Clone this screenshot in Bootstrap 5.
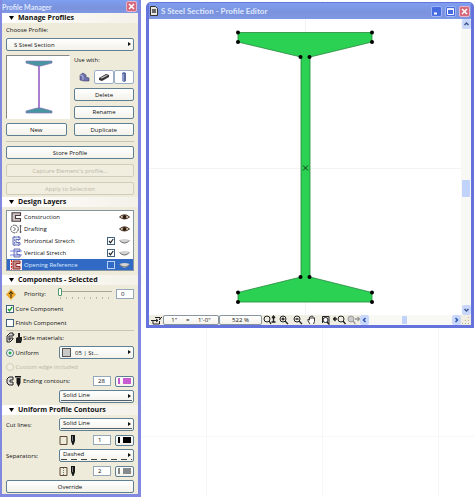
<!DOCTYPE html>
<html lang="en">
<head>
<meta charset="utf-8">
<meta name="viewport" content="width=device-width, initial-scale=1">
<title>Profile Manager</title>
<link href="https://cdn.jsdelivr.net/npm/bootstrap@5.3.0/dist/css/bootstrap.min.css" rel="stylesheet">
<style>
:root{--face:#eeebdb;--edge:#5f7f93}
body{font-family:"Open Sans","Noto Sans",sans-serif;font-size:6px;line-height:10px;color:#111;background:#fff}
button,input,select{font:inherit;color:inherit;border-radius:2px}
.manager{flex:0 0 141px;background:var(--face);border:solid #8188df;border-width:0 3px 3px 2px;min-height:100vh}
.titlebar{font-family:Lato,sans-serif;font-size:7px;background:linear-gradient(#7f9ff0,#7b92dc 60%,#7f98e4);color:#dfe8ff;font-weight:700}
.manager .titlebar{height:13px;padding-right:1px}
.head{font-size:7px;line-height:10px;font-weight:700;margin:0;color:#111;background:linear-gradient(90deg,#fff,#f3f1e8);padding-left:7px}
.head svg{width:5px;height:4px;margin-right:4px}
.group{padding:3px 4px 2px;display:flex;flex-direction:column}
.group.top{padding-top:2px}
.gap2{gap:2px}.gap3{gap:3px}.gap5{gap:5px}.gap7{gap:7px}
.ctl{height:13px;line-height:10px;padding:0 3px;border:1px solid var(--edge);background:linear-gradient(#fff,#f3f2ea);text-align:center}
.ctl:disabled{color:#bab7a5;border-color:#d0cdbb;background:#f1eee0}
.pick{position:relative}
.pick select{appearance:none;width:100%;height:13px;padding:0 8px 0 3px;line-height:10px;border:1px solid var(--edge);background:linear-gradient(#fff,#f3f2ea);display:block}
.pick::after{content:"";position:absolute;right:3px;top:4px;border:solid transparent;border-width:2px 0 2px 3px;border-left-color:#111;pointer-events:none}
.pick.first select{padding-left:7px}
.pick.lined select{line-height:8px;padding-bottom:3px}
.pick.lined::before{content:"";position:absolute;left:2px;right:2px;bottom:2px;height:1px;background:#52606c}
.pick.dashed::before{background:repeating-linear-gradient(90deg,#444 0 6px,transparent 6px 10px)}
.pick.swatch select{padding-left:15px}
.pick.swatch::before{content:"";position:absolute;left:3px;top:2px;width:9px;height:9px;background:#c8c8c6;border:1px solid #555}
.half{flex:1 1 0}
.preview{width:64px;height:64px;background:#fff;border:1px solid;border-color:#888 #fff #fff #888}
.preview svg{width:100%;height:100%;display:block}
.tools{width:60px}
.tool{flex:1;height:14px;padding:0;border:1px solid transparent;background:none;line-height:0}
.tool.on{border-color:#9aafc6;background:#fff}
.tool svg{width:12px;height:10px}
.layers{background:#fff;border:1px solid #8795a1}
.layer{height:12px;padding:0 3px}
.layer.last{height:11px}
.layer>svg{width:12px;height:10px;margin-right:2px}
.layer>svg.eye{width:11px;height:8px;margin:0 0 0 4px}
.layer.chosen{background:#316ac5;color:#dfeaff}
.tick{appearance:none;width:8px;height:8px;margin:0;border:1px solid #42617c;background:#fff;border-radius:0;flex:none}
.tick:checked{background:#fff url("data:image/svg+xml,%3Csvg xmlns='http://www.w3.org/2000/svg' viewBox='0 0 6 6'%3E%3Cpath d='M1 3l1.5 1.8L5.2 1' fill='none' stroke='%23222' stroke-width='1.2'/%3E%3C/svg%3E") center/6px}
.tick.green:checked{background-image:url("data:image/svg+xml,%3Csvg xmlns='http://www.w3.org/2000/svg' viewBox='0 0 6 6'%3E%3Cpath d='M1 3l1.5 1.8L5.2 1' fill='none' stroke='%2322a033' stroke-width='1.4'/%3E%3C/svg%3E")}
.chosen .tick{background:#316ac5;border-color:#b9d0f5}
.dot{appearance:none;width:8px;height:8px;margin:0;border:1px solid #4d7184;border-radius:50%;background:#fff;flex:none}
.dot:checked{background:radial-gradient(#22a84a 0 1px,#fff 2px)}
.dot:disabled{border-color:#d0cdbb;background:#f1eee0}
.dim{color:#bab7a5}
.num{width:18px;height:10px;padding:0 4px;border:1px solid #93a8b8;background:#fff;border-radius:0}
.pen{width:19px;height:11px;padding:0 2px;gap:3px}
.pen i{width:2px;height:6px;background:var(--c)}
.pen b{width:8px;height:6px;background:var(--c)}
.violet{--c:#c75bd0}.ink{--c:#000}.gray{--c:#858a8c}
.slide{appearance:none;width:54px;height:12px;background:linear-gradient(#a9a798,#a9a798) 0 3px/100% 1px no-repeat,repeating-linear-gradient(90deg,#bdb9a6 0 1px,transparent 1px 6px) 2px 9px/100% 2px no-repeat;margin:0}
.slide::-webkit-slider-thumb{appearance:none;width:4px;height:8px;margin-top:-4px;border:1px solid #4f9a68;background:#fff;border-radius:1px}
.g16{width:16px;height:12px;flex:none;margin-right:1px}
.g10{width:10px;height:11px;flex:none}
.line10{height:10px}.line12{height:12px}.line13{height:13px}
.rule{border-top:1px solid #c9c6b5}
.rule.spaced{margin-top:1px}
.w75{width:75px}
.work{flex:1;min-width:0;padding:2px 0 0 5px;min-height:100vh;background:
 linear-gradient(#f6f6f6,#f6f6f6) 65px 0/1px 100% no-repeat,
 linear-gradient(#f6f6f6,#f6f6f6) 181px 0/1px 100% no-repeat,
 linear-gradient(#f6f6f6,#f6f6f6) 297px 0/1px 100% no-repeat,
 linear-gradient(#f6f6f6,#f6f6f6) 0 436px/100% 1px no-repeat,#fff}
.editor{border:solid #6573dc;border-width:1px 3px 3px 3px;border-radius:5px 5px 0 0;background:#fff}
.editor .titlebar{height:16px;font-size:8px;padding:0 1px}
.doc{width:8px;height:10px}
.cap{width:11px;height:11px;padding:0;border:1px solid #9db4f4;background:#476be0;line-height:0}
.cap.close-x{background:#d5697c;border-color:#e8b4cc}
.cap svg,.sb svg{width:100%;height:100%;display:block}
.drawing{flex:1;min-width:0;height:auto;display:block}
.vbar{width:10px;background:#f8f8f5}
.sb{width:9px;height:10px;padding:1px;border:0;background:#c9d8fa;flex:none}
.thumb{background:#c1d3fb;border-radius:1px}
.vbar .thumb{width:8px;height:17px}
.before-v{flex:7}.after-v{flex:5}.before-h{flex:3}.after-h{flex:4}
.status{height:10px;background:#f0eee2}
.status .ctl{height:10px;line-height:8px;border-color:#8995a0}
.scale{width:56px}.zoomval{width:43px}
.ico{width:14px;padding:0;border:0;background:none;line-height:0;color:#222}
.ico svg{width:13px;height:10px}
.ico:disabled{color:#999}
.hbar{flex:1;background:#f8f8f5}
.hbar .thumb{width:5px;height:8px}
.grip{width:10px;height:10px}
</style>
<script src="https://cdn.jsdelivr.net/npm/bootstrap@5.3.0/dist/js/bootstrap.bundle.min.js"></script>
</head>
<body>
<svg class="d-none" aria-hidden="true">
<symbol id="tri" viewBox="0 0 5 4"><path d="M0 0h5L2.500 4z"/></symbol>
<symbol id="eyeopen" viewBox="0 0 11 8"><path d="M.5 4Q5.500-.5 10.500 4 5.500 8 .5 4z" fill="#e6d9c6" stroke="#4a3423"/><circle cx="5.500" cy="4" r="2" fill="#2d1b10"/></symbol>
<symbol id="eyeshut" viewBox="0 0 11 8"><path d="M.5 3Q5.500 1 10.500 3 8 7 5.500 6.500 3 7 .5 3z" fill="#d3d3d3"/><path d="M.5 3.500Q5.500 8.500 10.500 3.500" fill="none" stroke="#777"/></symbol>
<symbol id="nib" viewBox="0 0 6 11"><path d="M1 0h4v6L3.500 10h-1L1 6z" fill="#171717"/><path d="M2.500 1v5" stroke="#aaa" stroke-width=".7"/></symbol>
<symbol id="channel" viewBox="0 0 12 10"><path d="M10.500.8H2v8.400h8.500V6.500H5.500v-3h5z" fill="#c9c5c5" stroke="#4b3a3a" stroke-width="1.100"/></symbol>
<symbol id="cross" viewBox="0 0 9 9"><path d="M2 2l5 5M7 2L2 7" stroke="#fff" stroke-width="1.500"/></symbol>
</svg>
<div class="d-flex align-items-start">
<aside class="manager">
  <div class="titlebar d-flex align-items-center justify-content-between"><span>Profile Manager</span>
    <button class="cap close-x" aria-label="Close panel"><svg><use href="#cross"/></svg></button></div>
  <h2 class="head"><svg><use href="#tri"/></svg>Manage Profiles</h2>
  <div class="group top gap-1">
    <div class="d-flex flex-column gap3">
      <label for="profile" class="line10">Choose Profile:</label>
      <div class="pick first"><select id="profile"><option>S Steel Section</option></select></div>
    </div>
    <div class="d-flex justify-content-between">
      <div class="preview"><svg viewBox="0 0 62 62"><path d="M32 8v46" stroke="#8f55c0" stroke-width="1.500"/><path d="M19 5h26v2l-11 3h-4l-11-3zM19 57h26v-2l-11-3h-4l-11 3z" fill="#4795a0" stroke="#8975b8" stroke-width=".7"/></svg></div>
      <div class="tools d-flex flex-column justify-content-between">
        <span>Use with:</span>
        <div class="d-flex">
          <button class="tool" aria-label="Wall"><svg viewBox="0 0 12 10"><path d="M2 3l3-2 3 2v2l3 1v3H6L2 8z" fill="#6c70ac" stroke="#44476e" stroke-width=".6"/><path d="M2 3l3 1v4" stroke="#b6b9df" fill="none"/></svg></button>
          <button class="tool on" aria-label="Beam"><svg viewBox="0 0 12 10"><path d="M1 6l7-4 3 1v2L4 9 1 8z" fill="#333"/><path d="M2 6l6-3 2 .5-6 3z" fill="#bbb"/></svg></button>
          <button class="tool on" aria-label="Column"><svg viewBox="0 0 12 10"><path d="M4 1l2-1 2 1v8l-2 1-2-1z" fill="#5a6ba0"/><path d="M5 2v7" stroke="#c3cdf0"/></svg></button>
        </div>
        <button class="ctl">Delete</button>
        <button class="ctl">Rename</button>
      </div>
    </div>
    <div class="d-flex gap7"><button class="ctl half">New</button><button class="ctl half">Duplicate</button></div>
    <div class="rule spaced"></div>
    <div class="d-flex flex-column gap5">
      <button class="ctl">Store Profile</button>
      <button class="ctl" disabled>Capture Element's profile...</button>
      <button class="ctl" disabled>Apply to Selection</button>
    </div>
  </div>
  <h2 class="head"><svg><use href="#tri"/></svg>Design Layers</h2>
  <div class="group pb-1">
    <div class="layers">
      <div class="layer d-flex align-items-center"><svg><use href="#channel"/></svg><span class="flex-grow-1">Construction</span><svg class="eye"><use href="#eyeopen"/></svg></div>
      <div class="layer d-flex align-items-center"><svg viewBox="0 0 12 10"><circle cx="4.500" cy="5" r="3.800" fill="none" stroke="#444" stroke-dasharray="2 .6"/><path d="M3.500 3l2 2-2 2M10.500 1v8M9.500 2h2M9.500 8h2" fill="none" stroke="#555" stroke-width=".9"/></svg><span class="flex-grow-1">Drafting</span><svg class="eye"><use href="#eyeopen"/></svg></div>
      <div class="layer d-flex align-items-center"><svg viewBox="0 0 12 10"><path d="M10 1H3v8h7V6.500H6v-3h4z" fill="#dfe2f6" stroke="#5b66a4" stroke-width=".9"/><path d="M4.500 0v10M8.500 0v10" stroke="#5a68d8" stroke-dasharray="2 1" stroke-width=".7"/></svg><label for="hs" class="flex-grow-1">Horizontal Stretch</label><input class="tick" type="checkbox" id="hs" checked><svg class="eye"><use href="#eyeshut"/></svg></div>
      <div class="layer d-flex align-items-center"><svg viewBox="0 0 12 10"><path d="M10 1H4v8h6V6.500H7v-3h3z" fill="#dfe2f6" stroke="#5b66a4" stroke-width=".9"/><path d="M0 3h12M0 7h12" stroke="#5a68d8" stroke-width=".8"/></svg><label for="vs" class="flex-grow-1">Vertical Stretch</label><input class="tick" type="checkbox" id="vs" checked><svg class="eye"><use href="#eyeshut"/></svg></div>
      <div class="layer last chosen d-flex align-items-center"><svg viewBox="0 0 12 10"><path d="M0 0h12v10H0z" fill="#f7e7e7"/><path d="M10 1H3v8h7V6.500H6v-3h4z" fill="#c98e8e" stroke="#8c2b2b"/><path d="M1.500 0v10" stroke="#d22" stroke-dasharray="2 1"/></svg><label for="or" class="flex-grow-1">Opening Reference</label><input class="tick" type="checkbox" id="or"><svg class="eye"><use href="#eyeshut"/></svg></div>
    </div>
  </div>
  <h2 class="head"><svg><use href="#tri"/></svg>Components - Selected</h2>
  <div class="group gap3">
    <div class="d-flex align-items-center line12">
      <svg class="g10" viewBox="0 0 10 11"><path d="M5 0l5 5.500L5 11 0 5.500z" fill="#e9a92d"/><path d="M5 9V3M3 5l2-2.500L7 5" stroke="#3b2300" fill="none"/></svg>
      <label for="prio" class="flex-grow-1 ps-2">Priority:</label><input class="slide me-1" id="prio" type="range" min="0" max="10" value="0"><input class="num" aria-label="Priority value" value="0"></div>
    <div class="d-flex align-items-center line12"><input class="tick green" id="core" type="checkbox" checked><label for="core">&nbsp;Core Component</label></div>
    <div class="d-flex flex-column gap2">
      <div class="d-flex align-items-center line10"><input class="tick" id="fin" type="checkbox"><label for="fin">&nbsp;Finish Component</label></div>
      <div class="rule"></div>
      <div class="d-flex align-items-center line10"><svg class="g16" viewBox="0 0 16 12"><path d="M7 3V1H4L1 4v6h3l3-3V6H4v2H3V4h4l1-2" fill="#ddd" stroke="#222"/><path d="M12 1h2v4h2v3l-1 3h-5V6l2-1z" fill="#222"/></svg><span>Side materials:</span></div>
    </div>
    <div class="d-flex align-items-center line13"><input class="dot" type="radio" name="mat" id="uni" checked><label for="uni" class="flex-grow-1">&nbsp;Uniform</label><div class="pick swatch w75"><select aria-label="Material"><option>05 | St...</option></select></div></div>
    <div class="d-flex align-items-center line10 dim"><input class="dot" type="radio" name="mat" id="cus" disabled><label for="cus">&nbsp;Custom edge included</label></div>
    <div class="d-flex align-items-center line12"><svg class="g16" viewBox="0 0 16 12"><path d="M7 2H3L1 4v4l2 2h4V7H4V5h3z" fill="#ddd" stroke="#222"/><path d="M9 1h6v1.500H9zM10.500 3h4v5l-2 4-2-4z" fill="#171717"/></svg><label for="endp" class="flex-grow-1">Ending contours:</label><input class="num me-1" id="endp" value="28"><button class="ctl pen d-flex align-items-center violet" aria-label="Ending pen"><i></i><b></b></button></div>
    <div class="pick lined w75 ms-auto"><select aria-label="Ending line type"><option>Solid Line</option></select></div>
  </div>
  <h2 class="head"><svg><use href="#tri"/></svg>Uniform Profile Contours</h2>
  <div class="group gap3 pb-0">
    <div class="d-flex align-items-center justify-content-between"><label for="cut">Cut lines:</label><div class="pick lined w75"><select id="cut"><option>Solid Line</option></select></div></div>
    <div class="d-flex align-items-center line12 w75 ms-auto"><svg class="g10" viewBox="0 0 10 11"><path d="M1 1.500h7v8H1z" fill="none" stroke="#5d4936"/></svg><svg class="g10" viewBox="0 0 10 11"><use href="#nib" width="6" height="11" x="1"/></svg><input class="num ms-auto me-1" aria-label="Cut line pen" value="1"><button class="ctl pen d-flex align-items-center ink" aria-label="Cut pen"><i></i><b></b></button></div>
    <div class="d-flex align-items-center justify-content-between"><label for="sep">Separators:</label><div class="pick lined dashed w75"><select id="sep"><option>Dashed</option></select></div></div>
    <div class="d-flex align-items-center line12 w75 ms-auto"><svg class="g10" viewBox="0 0 10 11"><path d="M1 1.500h7v8H1z" fill="none" stroke="#5d4936"/><path d="M4.500 2v7" stroke="#777" stroke-dasharray="1 1"/></svg><svg class="g10" viewBox="0 0 10 11"><use href="#nib" width="6" height="11" x="1"/></svg><input class="num ms-auto me-1" aria-label="Separator pen number" value="2"><button class="ctl pen d-flex align-items-center gray" aria-label="Separator pen"><i></i><b></b></button></div>
    <button class="ctl">Override</button>
  </div>
</aside>
<main class="work">
  <section class="editor">
    <div class="titlebar d-flex align-items-center gap3"><svg class="doc" viewBox="0 0 8 10"><path d="M.5.500h5l2 2v7h-7z" fill="#e8e8e0" stroke="#333"/><path d="M2 3h4v4H2z" fill="#666"/></svg><span class="flex-grow-1">S Steel Section - Profile Editor</span>
      <button class="cap" aria-label="Minimize"><svg viewBox="0 0 9 9"><path d="M2 6.500h3" stroke="#fff" stroke-width="2"/></svg></button>
      <button class="cap" aria-label="Maximize"><svg viewBox="0 0 9 9"><path d="M1.500 2h6v5.500h-6z" fill="none" stroke="#fff"/><path d="M1 2h7" stroke="#fff" stroke-width="1.500"/></svg></button>
      <button class="cap close-x" aria-label="Close"><svg><use href="#cross"/></svg></button>
    </div>
    <div class="d-flex">
      <svg class="drawing" viewBox="149 19 312 296" role="img" aria-label="Steel I section">
        <path d="M149 168.500h312M305.500 19v296" stroke="#f3f3f3"/>
        <path d="M238 32.500h134V42l-62 15v220l62 15.500v9.500H238v-9.500l63-15.500V57l-63-15z" fill="#2bd152" stroke="#27883f" stroke-width=".8"/>
        <g fill="#000"><circle cx="238" cy="32.500" r="2"/><circle cx="372" cy="32.500" r="2"/><circle cx="238" cy="42" r="2"/><circle cx="372" cy="42" r="2"/><circle cx="300.500" cy="57" r="2"/><circle cx="309.500" cy="57" r="2"/><circle cx="300.500" cy="277" r="2"/><circle cx="309.500" cy="277" r="2"/><circle cx="238" cy="292.500" r="2"/><circle cx="372" cy="292.500" r="2"/><circle cx="238" cy="302" r="2"/><circle cx="372" cy="302" r="2"/></g>
        <path d="M303 165.500l5 5M308 165.500l-5 5" stroke="#133b1a"/>
      </svg>
      <div class="vbar d-flex flex-column align-items-center">
        <button class="sb" aria-label="Scroll up"><svg viewBox="0 0 7 8"><path d="M1.500 5l2-2 2 2" fill="none" stroke="#40588f" stroke-width="1.500"/></svg></button><div class="before-v"></div><div class="thumb"></div><div class="after-v"></div>
        <button class="sb" aria-label="Scroll down"><svg viewBox="0 0 7 8"><path d="M1.500 3l2 2 2-2" fill="none" stroke="#40588f" stroke-width="1.500"/></svg></button>
      </div>
    </div>
    <div class="status d-flex align-items-center">
      <button class="ico" aria-label="Fit page"><svg viewBox="0 0 13 10"><path d="M5 2.500h5v2M3 5v4h6.500V6M1 5.500h7M6 4l2 1.500L6 7M12 2l-3 3" fill="none" stroke="currentColor"/></svg></button>
      <button class="ctl scale d-flex justify-content-around"><span>1"</span><span>=</span><span>1'-0"</span></button>
      <button class="ctl zoomval">522 %</button>
      <button class="ico" aria-label="Zoom menu"><svg viewBox="0 0 13 10"><circle cx="4" cy="4" r="3" fill="none" stroke="currentColor"/><path d="M6 6l2 3M10.500 1v6M9 3l1.500-2L12 3M8.500 7h4" stroke="currentColor" stroke-width="1.300" fill="none"/></svg></button>
      <button class="ico" aria-label="Zoom in"><svg viewBox="0 0 13 10"><circle cx="6" cy="4" r="3" fill="none" stroke="currentColor"/><path d="M8 6l3 3M4.500 4h3M6 2.500v3" stroke="currentColor" stroke-width="1.300"/></svg></button>
      <button class="ico" aria-label="Zoom out"><svg viewBox="0 0 13 10"><circle cx="6" cy="4" r="3" fill="none" stroke="currentColor"/><path d="M8 6l3 3M4.500 4h3" stroke="currentColor" stroke-width="1.300"/></svg></button>
      <button class="ico" aria-label="Pan"><svg viewBox="0 0 13 10"><path d="M5 9L3 6V4l1.500 1V2l1-.5L7 1l1 .5L9.500 3v3.500L8.500 9M6 2v2M8 2v2" fill="#fff" stroke="currentColor" stroke-width=".9"/></svg></button>
      <button class="ico" aria-label="Fit in window"><svg viewBox="0 0 13 10"><path d="M3.500 8V1.500h6.500V8" fill="none" stroke="currentColor"/><circle cx="6.500" cy="5" r="2.500" fill="#fff" stroke="currentColor"/><path d="M8 7l2.500 2.500" stroke="currentColor" stroke-width="1.500"/></svg></button>
      <button class="ico" aria-label="Previous zoom"><svg viewBox="0 0 13 10"><circle cx="8" cy="4" r="3" fill="none" stroke="currentColor"/><path d="M10 6l2.500 3M0 4h4M2.500 2L.5 4l2 2" stroke="currentColor" stroke-width="1.300" fill="none"/></svg></button>
      <button class="ico" aria-label="Next zoom" disabled><svg viewBox="0 0 13 10"><circle cx="4" cy="4" r="3" fill="#ccc" stroke="currentColor"/><path d="M6 6l2.500 3M8 4h4M10.500 2l2 2-2 2" stroke="currentColor" stroke-width="1.300" fill="none"/></svg></button>
      <div class="hbar d-flex align-items-center">
        <button class="sb" aria-label="Scroll left"><svg viewBox="0 0 7 8"><path d="M4.500 2l-2 2 2 2" fill="none" stroke="#2b55ad" stroke-width="1.500"/></svg></button><div class="before-h"></div><div class="thumb"></div><div class="after-h"></div>
        <button class="sb" aria-label="Scroll right"><svg viewBox="0 0 7 8"><path d="M2.500 2l2 2-2 2" fill="none" stroke="#2b55ad" stroke-width="1.500"/></svg></button>
      </div>
      <svg class="grip" viewBox="0 0 10 10"><path d="M7 2h1v1H7zM7 5h1v1H7zM4 5h1v1H4zM7 8h1v1H7zM4 8h1v1H4zM1 8h1v1H1z" fill="#b8b39a"/></svg>
    </div>
  </section>
</main>
</div>
</body>
</html>
